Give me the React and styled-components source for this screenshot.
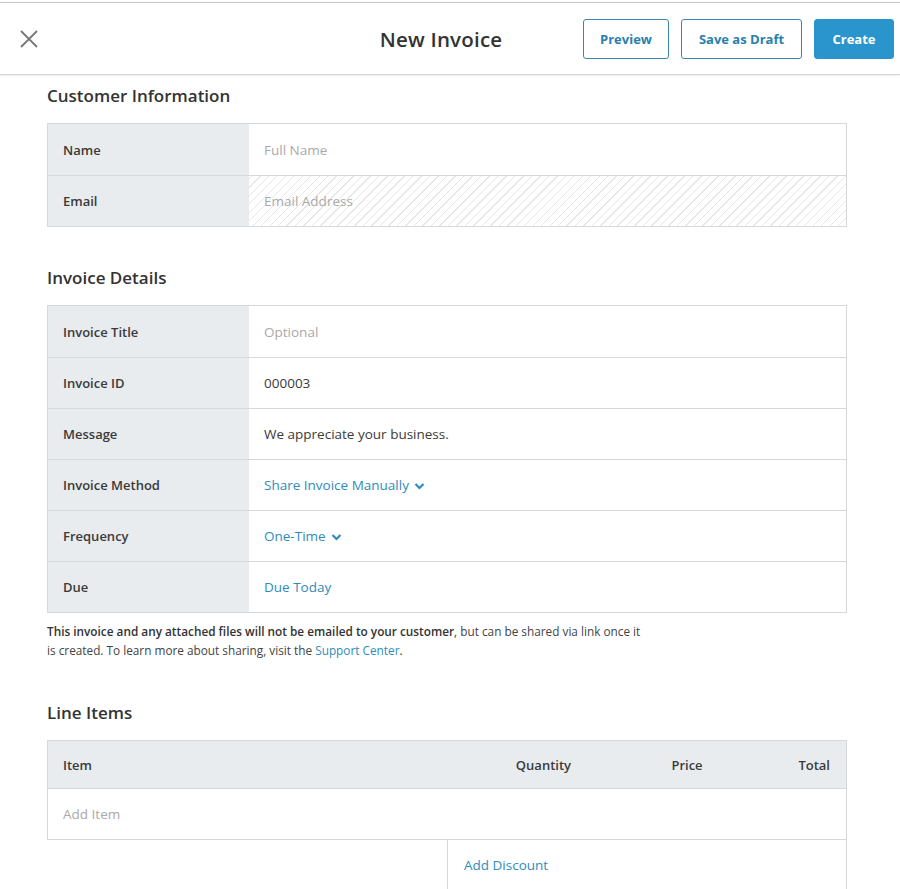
import styled, { createGlobalStyle } from "styled-components";

const GlobalStyle = createGlobalStyle`
  html, body {
    margin: 0;
    padding: 0;
    background: #fff;
  }
  body {
    font-family: "Open Sans", "Liberation Sans", sans-serif;
    color: #333;
    -webkit-font-smoothing: antialiased;
  }
  * {
    box-sizing: border-box;
  }
`;

const Page = styled.div`
  padding-top: 2px;
`;

const Header = styled.header`
  height: 73px;
  border-top: 1px solid #c6c6c6;
  border-bottom: 1px solid #d4d4d4;
  box-shadow: 0 1px 2px rgba(0, 0, 0, 0.08);
  display: grid;
  grid-template-columns: 1fr auto 1fr;
  align-items: center;
  padding: 0 6px 0 18px;
`;

const CloseButton = styled.button`
  background: none;
  border: 0;
  padding: 0;
  width: 22px;
  height: 22px;
  color: #777;
  cursor: pointer;
  display: flex;
  align-items: center;
  justify-content: center;
`;

const Title = styled.h1`
  margin: 0 30px 0 0;
  font-size: 20.5px;
  font-weight: 600;
  color: #333;
  letter-spacing: 0.2px;
`;

const Actions = styled.div`
  display: flex;
  justify-content: flex-end;
  gap: 12px;
`;

const Button = styled.button`
  height: 40px;
  min-width: ${(p) => p.minWidth || 0}px;
  padding: 0 16px;
  border-radius: 3px;
  font-family: inherit;
  font-size: 13px;
  font-weight: 700;
  cursor: pointer;
  border: 1px solid ${(p) => (p.primary ? "#2a95cc" : "#3b87ac")};
  background: ${(p) => (p.primary ? "#2a95cc" : "#fff")};
  color: ${(p) => (p.primary ? "#fff" : "#2b7fae")};
`;

const Content = styled.main`
  width: 800px;
  margin-left: 47px;
  padding-top: 10px;
`;

const Section = styled.section`
  margin-bottom: ${(p) => p.gap || 0}px;
`;

const SectionTitle = styled.h2`
  margin: 0 0 16px;
  font-size: 17px;
  font-weight: 600;
  color: #333;
  line-height: 22px;
`;

const Table = styled.div`
  border: 1px solid #d6d9db;
`;

const Row = styled.div`
  display: grid;
  grid-template-columns: 201px 1fr;
  height: 51px;
  & + & {
    border-top: 1px solid #d6d9db;
  }
`;

const Label = styled.div`
  background: #e9ecee;
  display: flex;
  align-items: center;
  padding-left: 15px;
  font-size: 13px;
  font-weight: 600;
  color: #3a3a3a;
`;

const Value = styled.div`
  display: flex;
  align-items: center;
  padding-left: 15px;
  font-size: 13.5px;
  color: ${(p) => (p.placeholder ? "#a9a9a9" : p.link ? "#2f8bbd" : "#3a3a3a")};
  background: ${(p) =>
    p.hatched
      ? "repeating-linear-gradient(-45deg, #fff 0px, #fff 5px, #e6e6e6 5px, #e6e6e6 6px)"
      : "#fff"};
`;

const Chevron = styled.svg`
  margin-left: 5px;
  margin-top: 1px;
`;

const Note = styled.p`
  margin: 9px 0 0;
  width: 600px;
  font-size: 11.8px;
  line-height: 19px;
  color: #444;
  strong {
    font-weight: 600;
    color: #333;
  }
  a {
    color: #2f8bbd;
    text-decoration: none;
  }
`;

const ItemsTable = styled.div`
  border: 1px solid #d6d9db;
`;

const ItemsHead = styled.div`
  display: grid;
  grid-template-columns: 1fr 203px 66px 110px;
  height: 48px;
  align-items: center;
  background: #e9ecee;
  border-bottom: 1px solid #d6d9db;
  padding: 0 16px 0 15px;
  font-size: 13px;
  font-weight: 600;
  color: #3a3a3a;
`;

const HeadCell = styled.div`
  text-align: ${(p) => p.align || "left"};
  padding-right: ${(p) => p.inset || 0}px;
`;

const ItemRow = styled.div`
  height: 50px;
  display: flex;
  align-items: center;
  padding-left: 15px;
  font-size: 13.5px;
  color: #a9a9a9;
`;

const Totals = styled.div`
  margin-left: 400px;
  border-left: 1px solid #d6d9db;
  border-right: 1px solid #d6d9db;
  height: 50px;
  display: flex;
  align-items: center;
  padding-left: 16px;
  font-size: 13.5px;
  color: #2f8bbd;
`;

function ChevronDown() {
  return (
    <Chevron width="11" height="8" viewBox="0 0 11 8">
      <path d="M1.5 2 L5.5 6 L9.5 2" fill="none" stroke="#2f8bbd" strokeWidth="2.2" />
    </Chevron>
  );
}

const details = [
  { label: "Invoice Title", value: "Optional", placeholder: true },
  { label: "Invoice ID", value: "000003" },
  { label: "Message", value: "We appreciate your business." },
  { label: "Invoice Method", value: "Share Invoice Manually", link: true, chevron: true },
  { label: "Frequency", value: "One-Time", link: true, chevron: true },
  { label: "Due", value: "Due Today", link: true },
];

export default function App() {
  return (
    <Page>
      <GlobalStyle />
      <Header>
        <div>
          <CloseButton aria-label="Close">
            <svg width="20" height="20" viewBox="0 0 20 20">
              <path d="M2 2 L18 18 M18 2 L2 18" stroke="#777" strokeWidth="1.8" />
            </svg>
          </CloseButton>
        </div>
        <Title>New Invoice</Title>
        <Actions>
          <Button minWidth={86}>Preview</Button>
          <Button minWidth={121}>Save as Draft</Button>
          <Button primary minWidth={80}>Create</Button>
        </Actions>
      </Header>
      <Content>
        <Section gap={40}>
          <SectionTitle>Customer Information</SectionTitle>
          <Table>
            <Row>
              <Label>Name</Label>
              <Value placeholder>Full Name</Value>
            </Row>
            <Row>
              <Label>Email</Label>
              <Value placeholder hatched>Email Address</Value>
            </Row>
          </Table>
        </Section>
        <Section gap={42}>
          <SectionTitle>Invoice Details</SectionTitle>
          <Table>
            {details.map((d) => (
              <Row key={d.label}>
                <Label>{d.label}</Label>
                <Value placeholder={d.placeholder} link={d.link}>
                  {d.value}
                  {d.chevron && <ChevronDown />}
                </Value>
              </Row>
            ))}
          </Table>
          <Note>
            <strong>This invoice and any attached files will not be emailed to your customer</strong>, but can be shared via link once it
            is created. To learn more about sharing, visit the <a href="#">Support Center</a>.
          </Note>
        </Section>
        <Section>
          <SectionTitle>Line Items</SectionTitle>
          <ItemsTable>
            <ItemsHead>
              <HeadCell>Item</HeadCell>
              <HeadCell align="right" inset={83}>Quantity</HeadCell>
              <HeadCell align="center">Price</HeadCell>
              <HeadCell align="right">Total</HeadCell>
            </ItemsHead>
            <ItemRow>Add Item</ItemRow>
          </ItemsTable>
          <Totals>Add Discount</Totals>
        </Section>
      </Content>
    </Page>
  );
}
